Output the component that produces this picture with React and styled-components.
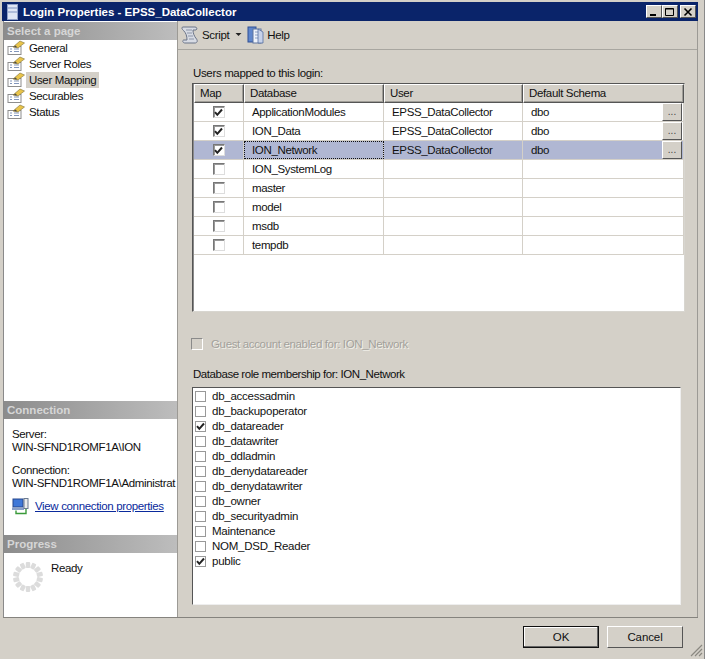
import React from "react";
import styled, { createGlobalStyle } from "styled-components";

const Global = createGlobalStyle`
  html, body { margin: 0; padding: 0; background: #d4d0c8; }
  * { box-sizing: border-box; }
`;

const Window = styled.div`
  width: 705px; height: 659px; background: #d4d0c8; display: flex; flex-direction: column;
  padding: 1px 2px 0 2px; overflow: hidden; position: relative;
  font: 11.5px "Liberation Sans", Arial, sans-serif; letter-spacing: -0.35px; color: #111;
  border-right: 1px solid #8a8a8a;
`;
const TitleBar = styled.div`
  height: 19px; margin: 1px 4px 0 0; background: #0a246a; color: #fff; display: flex; align-items: center;
  padding: 0 2px 0 5px; flex: none;
`;
const TitleText = styled.span`
  margin-left: 5px; font: bold 11.5px "Liberation Sans", Arial, sans-serif; letter-spacing: 0; flex: 1;
`;
const WinBtn = styled.button`
  width: 16px; height: 13px; margin-left: ${p => p.$gap || 0}px; padding: 0; background: #d4d0c8; border: 1px solid; border-color: #fff #555 #555 #fff;
  display: flex; align-items: center; justify-content: center;
`;
const Main = styled.div`
  display: flex; height: 597px; flex: none; margin-right: 4px; margin-left: 1px;
  border-bottom: 1px solid #85837e;
`;
const Sidebar = styled.aside`
  width: 175px; flex: none; background: #fff; border-left: 1px solid #8a8a8a; border-right: 1px solid #9c9a95;
  display: flex; flex-direction: column; padding-top: 1px;
`;
const PageSection = styled.section` height: 379px; flex: none; `;
const ConnSection = styled.section` height: 134px; flex: none; `;
const ProgressSection = styled.section` flex: 1; `;
const SectionHead = styled.div`
  height: 18px; background: linear-gradient(90deg, #8c8c8c, #bdbdbd); color: #d6d6d6;
  font: bold 11.5px "Liberation Sans", Arial, sans-serif; letter-spacing: 0; padding: 2px 0 0 3px; line-height: 15px;
`;
const PageList = styled.div` padding-left: 3px; display: flex; flex-direction: column; `;
const PageItem = styled.div` height: 16px; display: flex; align-items: center; gap: 1px; line-height: 16px; `;
const PageLabel = styled.span`
  padding: 0 3px; height: 16px; background: ${p => (p.$selected ? "#d4d0c8" : "transparent")};
`;
const ConnBody = styled.div` padding: 9px 0 0 8px; line-height: 13px; white-space: nowrap; overflow: hidden; `;
const ConnBlock = styled.div` margin-bottom: 10px; `;
const LinkRow = styled.div` display: flex; align-items: center; gap: 6px; margin-top: -2px; `;
const Link = styled.a` color: #0a2a9c; text-decoration: underline; `;
const ProgressBody = styled.div` display: flex; padding: 9px 0 0 9px; gap: 8px; `;
const ReadyText = styled.span` line-height: 15px; margin-top: -1px; `;

const Content = styled.div`
  flex: 1; display: flex; flex-direction: column; border-right: 1px solid #9c9a95; min-width: 0;
`;
const Toolbar = styled.div`
  height: 29px; flex: none; display: flex; align-items: center; padding: 0 0 0 3px; border-bottom: 1px solid #a8a6a0;
`;
const ToolBtn = styled.span` display: flex; align-items: center; gap: 3px; `;
const Body = styled.div` padding: 16px 0 0 14px; display: flex; flex-direction: column; `;
const Caption = styled.div` height: 15px; line-height: 15px; padding-left: 1px; `;
const Grid = styled.div`
  margin-top: 2px; width: 493px; height: 229px; background: #fff; border: 1px solid; border-color: #555 #d8d6d0 #d8d6d0 #555;
  box-shadow: inset 1px 1px 0 #8a8a8a;
  padding: 0 0 0 1px; display: flex; flex-direction: column;
`;
const Cols = "50px 140px 139px 1fr";
const HeadRow = styled.div` display: grid; grid-template-columns: ${Cols}; height: 19px; flex: none; `;
const HeadCell = styled.div`
  background: #d4d0c8; border: 1px solid; border-color: #fff #555 #555 #fff; padding-left: 5px; line-height: 16px;
  box-shadow: inset -1px -1px 0 #a09e98;
`;
const Row = styled.div`
  display: grid; grid-template-columns: ${Cols}; height: 19px; flex: none; background: ${p => (p.$selected ? "#b0b7d3" : "transparent")};
  border-bottom: 1px solid #d4d0c8;
`;
const Cell = styled.div`
  border-right: 1px solid #d4d0c8; padding-left: ${p => (p.$center ? 0 : 8)}px; line-height: 18px; position: relative; display: flex; align-items: center;
  outline: ${p => (p.$focus ? "1px dotted #111" : "none")}; outline-offset: -1px;
  justify-content: ${p => (p.$center ? "center" : "flex-start")};
`;
const Ellipsis = styled.button`
  position: absolute; right: 1px; top: 0; width: 20px; height: 18px; padding: 0; background: #d4d0c8; border: 1px solid; border-color: #fff #555 #555 #fff;
  font: 10px "Liberation Sans", Arial, sans-serif; line-height: 14px; color: #444;
`;
const GridCheck = styled.span`
  width: 12px; height: 12px; background: #fff; border: 1px solid; border-color: #777 #ddd #ddd #777; box-shadow: inset 1px 1px 0 #999;
  display: flex; align-items: center; justify-content: center;
`;
const Guest = styled.div` display: flex; align-items: center; height: 14px; margin-top: 25px; gap: 8px; margin-left: -1px; color: #a3a19b; text-shadow: 1px 1px 0 #f2f0ea; `;
const GuestBox = styled.span` width: 12px; height: 12px; border: 1px solid; border-color: #8a8a8a #fff #fff #8a8a8a; `;
const RoleCaption = styled(Caption)` margin-top: 16px; letter-spacing: -0.45px; `;
const RoleList = styled.div`
  margin-top: 5px; width: 489px; height: 218px; background: #fff; border: 1px solid; border-color: #555 #eee #eee #555; padding: 1px 0 0 2px; letter-spacing: -0.25px;
`;
const RoleRow = styled.div` height: 15px; display: flex; align-items: center; gap: 6px; line-height: 15px; `;
const RoleCheck = styled.span`
  width: 11px; height: 11px; background: #fff; border: 1px solid #999; display: flex; align-items: center; justify-content: center;
`;
const Footer = styled.div`
  flex: 1; display: flex; justify-content: flex-end; padding: 8px 22px 0 0; gap: 8px; position: relative; margin-right: -3px;
`;
const DlgBtn = styled.button`
  width: 76px; height: 22px; background: #d4d0c8; font: 11.5px "Liberation Sans", Arial, sans-serif; letter-spacing: -0.1px; color: #111; padding: 0;
  border: 1px solid; border-color: ${p => (p.$def ? "#111" : "#fff #555 #555 #fff")};
  box-shadow: ${p => (p.$def ? "inset -1px -1px 0 #666, inset 1px 1px 0 #fff" : "none")};
`;
const Grip = styled.svg` position: absolute; right: 2px; bottom: 2px; `;
const DropArrow = styled.svg` margin: 0 3px 0 4px; `;

const Check = ({ size = 9 }) => (
  <svg width={size} height={size} viewBox="0 0 9 9"><path d="M1 4.2 L3.3 6.8 L8 1.5" fill="none" stroke="#222" strokeWidth="2" /></svg>
);
const PageIcon = () => (
  <svg width="18" height="16" viewBox="0 0 18 16">
    <rect x="1" y="6.5" width="13" height="8" fill="#fff" stroke="#8d8d8d" />
    <path d="M3 9h2M3 11.5h2M7 9h5M7 11.5h5" stroke="#8296bb" />
    <path d="M6 7 L13 1 L17.5 3 L11 8 Z" fill="#e9c44a" stroke="#7d6f38" strokeWidth=".6" />
    <path d="M6.5 7 L8.5 5.5 L10.5 7.5 Z" fill="#4a4a4a" />
  </svg>
);
const ScriptIcon = () => (
  <svg width="18" height="18" viewBox="0 0 18 18">
    <path d="M2 1 H14 C16 1 16.5 3 15 4 H12 C12 7 13 10 15.5 13 C17 15 16 17 14 17 H4 C2 17 1 15 2.5 14 H6 C6 10 5 7 2.5 4.5 C0.5 3 0.5 1 2 1 Z" fill="#d7dbe4" stroke="#6a7488" />
    <path d="M5 4h6M6 7h5M7 10h5M8 13h5" stroke="#8c95a8" />
  </svg>
);
const HelpIcon = () => (
  <svg width="17" height="18" viewBox="0 0 17 18">
    <rect x="1" y="1" width="8" height="15" fill="#5f86cc" stroke="#2f4f94" />
    <rect x="6" y="3" width="8" height="14" fill="#eef2fa" stroke="#5f759e" />
    <path d="M8 6h4M8 9h4M8 12h4" stroke="#8ca0c4" />
    <path d="M11 3 L16 6 V17 H11 Z" fill="#c6d2ea" stroke="#45619a" strokeWidth=".7" />
  </svg>
);
const ConnIcon = () => (
  <svg width="17" height="17" viewBox="0 0 17 17">
    <rect x="1" y="1" width="10" height="8" fill="#3f78d8" stroke="#27478c" />
    <rect x="0" y="9.5" width="12" height="2.5" fill="#8aa0c8" />
    <rect x="12" y="0.5" width="4" height="10" fill="#ececec" stroke="#6a7a90" />
    <path d="M4 12.5 V15.5 H14 V11" fill="none" stroke="#3a9a3a" strokeWidth="1.4" />
  </svg>
);
const Spinner = () => {
  const dots = Array.from({ length: 14 }, (_, i) => (i * 360) / 14);
  return (
    <svg width="30" height="30" viewBox="-15 -15 30 30">
      {dots.map(a => (
        <rect key={a} x="-2.2" y="-15" width="4.4" height="6" rx="1" fill="#dcdcdc" transform={`rotate(${a})`} />
      ))}
    </svg>
  );
};

const pages = ["General", "Server Roles", "User Mapping", "Securables", "Status"];
const dbs = [
  ["ApplicationModules", true],
  ["ION_Data", true],
  ["ION_Network", true],
  ["ION_SystemLog", false],
  ["master", false],
  ["model", false],
  ["msdb", false],
  ["tempdb", false],
];
const roles = [
  ["db_accessadmin"], ["db_backupoperator"], ["db_datareader", true], ["db_datawriter"], ["db_ddladmin"],
  ["db_denydatareader"], ["db_denydatawriter"], ["db_owner"], ["db_securityadmin"], ["Maintenance"], ["NOM_DSD_Reader"], ["public", true],
];

export default function App() {
  return (
    <Window>
      <Global />
      <TitleBar>
        <svg width="11" height="16" viewBox="0 0 11 16">
          <rect x="0.5" y="0.5" width="10" height="15" fill="#dfe6f4" stroke="#8fa0c8" />
          <path d="M1 4h9M1 8h9" stroke="#7f93c0" />
        </svg>
        <TitleText>Login Properties - EPSS_DataCollector</TitleText>
        <WinBtn><svg width="10" height="10"><rect x="1" y="7" width="6" height="2" fill="#000" /></svg></WinBtn>
        <WinBtn><svg width="10" height="10"><path d="M.5 1.5h8v7h-8zM.5 2h8" fill="none" stroke="#000" /></svg></WinBtn>
        <WinBtn $gap={2}><svg width="10" height="10"><path d="M1.5 1.5 L8.5 8.5 M8.5 1.5 L1.5 8.5" stroke="#000" strokeWidth="1.6" /></svg></WinBtn>
      </TitleBar>
      <Main>
        <Sidebar>
          <PageSection>
            <SectionHead>Select a page</SectionHead>
            <PageList>
              {pages.map(p => (
                <PageItem key={p}>
                  <PageIcon />
                  <PageLabel $selected={p === "User Mapping"}>{p}</PageLabel>
                </PageItem>
              ))}
            </PageList>
          </PageSection>
          <ConnSection>
            <SectionHead>Connection</SectionHead>
            <ConnBody>
              <ConnBlock>Server:<br />WIN-SFND1ROMF1A\ION</ConnBlock>
              <ConnBlock>Connection:<br />WIN-SFND1ROMF1A\Administrat</ConnBlock>
              <LinkRow><ConnIcon /><Link>View connection properties</Link></LinkRow>
            </ConnBody>
          </ConnSection>
          <ProgressSection>
            <SectionHead>Progress</SectionHead>
            <ProgressBody><Spinner /><ReadyText>Ready</ReadyText></ProgressBody>
          </ProgressSection>
        </Sidebar>
        <Content>
          <Toolbar>
            <ToolBtn><ScriptIcon />Script</ToolBtn>
            <DropArrow width="11" height="8" viewBox="0 0 11 8"><path d="M2.5 2h6l-3 3z" fill="#222" /></DropArrow>
            <ToolBtn><HelpIcon />Help</ToolBtn>
          </Toolbar>
          <Body>
            <Caption>Users mapped to this login:</Caption>
            <Grid>
              <HeadRow>
                <HeadCell>Map</HeadCell>
                <HeadCell>Database</HeadCell>
                <HeadCell>User</HeadCell>
                <HeadCell>Default Schema</HeadCell>
              </HeadRow>
              {dbs.map(([name, mapped]) => (
                <Row key={name} $selected={name === "ION_Network"}>
                  <Cell $center><GridCheck>{mapped && <Check />}</GridCheck></Cell>
                  <Cell $focus={name === "ION_Network"}>{name}</Cell>
                  <Cell>{mapped && "EPSS_DataCollector"}</Cell>
                  <Cell>{mapped && "dbo"}{mapped && <Ellipsis>...</Ellipsis>}</Cell>
                </Row>
              ))}
            </Grid>
            <Guest><GuestBox />Guest account enabled for: ION_Network</Guest>
            <RoleCaption>Database role membership for: ION_Network</RoleCaption>
            <RoleList>
              {roles.map(([r, on]) => (
                <RoleRow key={r}><RoleCheck>{on && <Check />}</RoleCheck>{r}</RoleRow>
              ))}
            </RoleList>
          </Body>
        </Content>
      </Main>
      <Footer>
        <DlgBtn $def>OK</DlgBtn>
        <DlgBtn>Cancel</DlgBtn>
        <Grip width="13" height="13" viewBox="0 0 13 13"><path d="M12 1 L1 12 M12 5 L5 12 M12 9 L9 12" stroke="#8a8880" strokeWidth="1.2" /></Grip>
      </Footer>
    </Window>
  );
}
